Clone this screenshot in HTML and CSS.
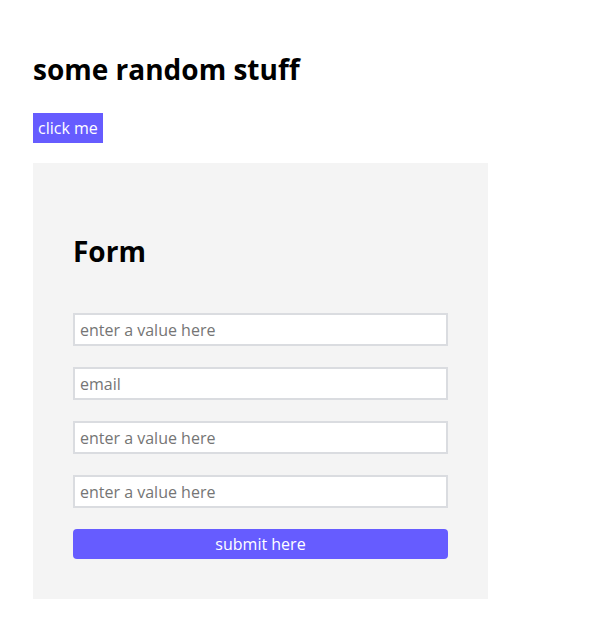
FILE: index.html
```html
<!DOCTYPE html>
<html>
<head>
<meta charset="utf-8">
<link rel="stylesheet" href="styles.css">
</head>
<body>
<div class="page">
  <h1 class="title">some random stuff</h1>
  <button class="click-btn">click me</button>
  <div class="form-box">
    <h2 class="form-title">Form</h2>
    <form class="form">
      <input class="field" type="text" placeholder="enter a value here">
      <input class="field" type="text" placeholder="email">
      <input class="field" type="text" placeholder="enter a value here">
      <input class="field" type="text" placeholder="enter a value here">
      <button class="submit-btn" type="button">submit here</button>
    </form>
  </div>
</div>
</body>
</html>
```
FILE: styles.css
```css
html, body {
  margin: 0;
  padding: 0;
  background: #ffffff;
}
body {
  font-family: "Open Sans", "Noto Sans", sans-serif;
  color: #000;
}
.page {
  padding: 49px 0 0 33px;
  display: flex;
  flex-direction: column;
  align-items: flex-start;
}
.title {
  margin: 0;
  height: 40px;
  font-size: 28px;
  line-height: 40px;
  font-weight: 700;
}
.click-btn {
  margin-top: 24px;
  height: 30px;
  padding: 0 5px;
  border: none;
  background: #665cff;
  color: #fff;
  font-family: inherit;
  font-size: 16px;
  line-height: 30px;
}
.form-box {
  margin-top: 20px;
  width: 375px;
  padding: 40px;
  background: #f4f4f4;
}
.form-title {
  margin: 28px 0 0 0;
  height: 40px;
  font-size: 28px;
  line-height: 40px;
  font-weight: 700;
}
.form {
  margin-top: 42px;
  display: flex;
  flex-direction: column;
  gap: 21px;
}
.field {
  box-sizing: border-box;
  height: 33px;
  width: 375px;
  margin: 0;
  border: 2px solid #dadce0;
  padding: 0 5px;
  background: #fff;
  font-family: inherit;
  font-size: 16px;
  outline: none;
}
.field::placeholder {
  color: #757575;
}
.submit-btn {
  height: 30px;
  width: 375px;
  border: none;
  border-radius: 4px;
  background: #665cff;
  color: #fff;
  font-family: inherit;
  font-size: 16px;
}
```
